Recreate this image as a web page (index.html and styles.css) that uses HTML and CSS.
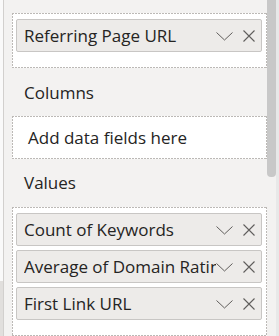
FILE: index.html
```html
<!DOCTYPE html>
<html>
<head>
<meta charset="utf-8">
<link rel="stylesheet" href="styles.css">
</head>
<body>
<div class="frame">
  <div class="edge"><div class="edge-top"></div><div class="edge-bottom"></div></div>
  <div class="panel">
    <div class="well well-filled">
      <div class="field">
        <span class="field-name">Referring Page URL</span>
        <svg class="chev" width="17" height="9" viewBox="0 0 17 9"><path d="M0.5 0.5 L8.5 8 L16.5 0.5" fill="none" stroke="#605e5c" stroke-width="1"/></svg>
        <svg class="close" width="12" height="12" viewBox="0 0 12 12"><path d="M0.5 0.5 L11.5 11.5 M11.5 0.5 L0.5 11.5" fill="none" stroke="#605e5c" stroke-width="1.1"/></svg>
      </div>
    </div>
    <div class="label">Columns</div>
    <div class="well well-empty">Add data fields here</div>
    <div class="label">Values</div>
    <div class="well well-filled">
      <div class="field">
        <span class="field-name">Count of Keywords</span>
        <svg class="chev" width="17" height="9" viewBox="0 0 17 9"><path d="M0.5 0.5 L8.5 8 L16.5 0.5" fill="none" stroke="#605e5c" stroke-width="1"/></svg>
        <svg class="close" width="12" height="12" viewBox="0 0 12 12"><path d="M0.5 0.5 L11.5 11.5 M11.5 0.5 L0.5 11.5" fill="none" stroke="#605e5c" stroke-width="1.1"/></svg>
      </div>
      <div class="field">
        <span class="field-name">Average of Domain Rating</span>
        <svg class="chev" width="17" height="9" viewBox="0 0 17 9"><path d="M0.5 0.5 L8.5 8 L16.5 0.5" fill="none" stroke="#605e5c" stroke-width="1"/></svg>
        <svg class="close" width="12" height="12" viewBox="0 0 12 12"><path d="M0.5 0.5 L11.5 11.5 M11.5 0.5 L0.5 11.5" fill="none" stroke="#605e5c" stroke-width="1.1"/></svg>
      </div>
      <div class="field">
        <span class="field-name">First Link URL</span>
        <svg class="chev" width="17" height="9" viewBox="0 0 17 9"><path d="M0.5 0.5 L8.5 8 L16.5 0.5" fill="none" stroke="#605e5c" stroke-width="1"/></svg>
        <svg class="close" width="12" height="12" viewBox="0 0 12 12"><path d="M0.5 0.5 L11.5 11.5 M11.5 0.5 L0.5 11.5" fill="none" stroke="#605e5c" stroke-width="1.1"/></svg>
      </div>
    </div>
  </div>
  <div class="scroll"><div class="thumb"></div></div>
</div>
</body>
</html>
```

FILE: styles.css
```css
html, body {
  margin: 0;
  padding: 0;
  height: 336px;
  overflow: hidden;
  background: #f3f2f1;
  font-family: "Open Sans", "Noto Sans", sans-serif;
  color: #252423;
}
.frame {
  display: flex;
  height: 336px;
}
.edge {
  width: 3px;
  border-right: 1px solid #d2d0ce;
  display: flex;
  flex-direction: column;
}
.edge-top {
  height: 281px;
  background: #fafafa;
}
.edge-bottom {
  flex: 1;
  background: #e1dfdd;
}
.panel {
  flex: 1;
  padding: 13px 0 0 8px;
  display: flex;
  flex-direction: column;
  min-width: 0;
}
.well {
  border: 1px solid transparent;
  background:
    repeating-linear-gradient(90deg, #bcb9b6 0 2px, transparent 2px 3px) top left / 100% 1px no-repeat,
    repeating-linear-gradient(90deg, #bcb9b6 0 2px, transparent 2px 3px) bottom left / 100% 1px no-repeat,
    repeating-linear-gradient(180deg, #bcb9b6 0 2px, transparent 2px 3px) top left / 1px 100% no-repeat,
    repeating-linear-gradient(180deg, #bcb9b6 0 2px, transparent 2px 3px) top right / 1px 100% no-repeat,
    #ffffff;
  background-origin: border-box;
}
.well-filled {
  padding: 5px 4px 15px 3px;
  display: flex;
  flex-direction: column;
  gap: 4px;
}
.well-empty {
  box-sizing: border-box;
  height: 43px;
  padding-left: 15px;
  display: flex;
  align-items: center;
  font-size: 17px;
}
.label {
  font-size: 17px;
  padding-left: 12px;
  height: 49px;
  display: flex;
  align-items: center;
}
.field {
  height: 33px;
  box-sizing: border-box;
  border: 1px solid #c8c6c4;
  border-radius: 2px;
  background: #edebe9;
  display: flex;
  align-items: center;
  padding: 0 6px 0 7px;
}
.field-name {
  flex: 1;
  min-width: 0;
  white-space: nowrap;
  overflow: hidden;
  font-size: 17px;
}
.chev {
  flex: none;
  margin: 2px 10px 0 0;
}
.close {
  flex: none;
}
.scroll {
  width: 12px;
  display: flex;
  border-right: 3px solid #e8e8e8;
  box-sizing: border-box;
}
.thumb {
  width: 9px;
  height: 177px;
  background: #c8c8c8;
  border-radius: 0 0 4px 4px;
}
```
